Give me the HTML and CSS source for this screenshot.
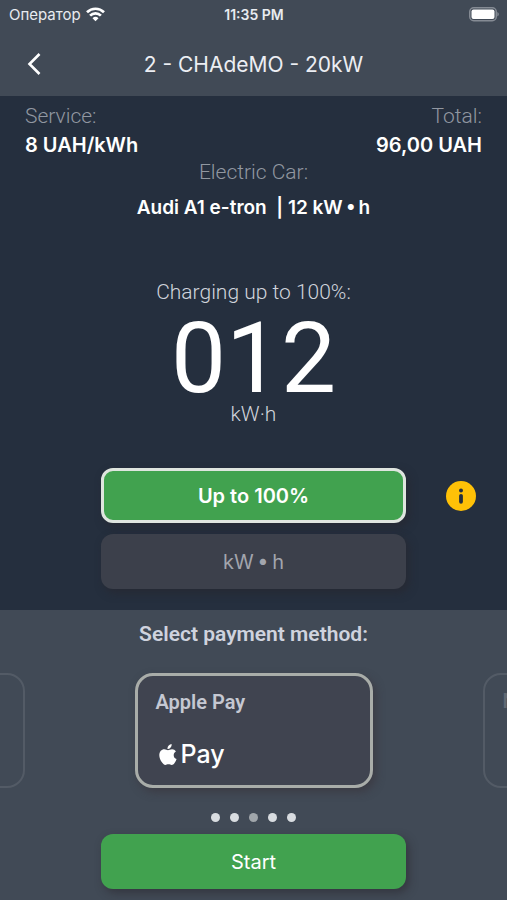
FILE: index.html
```html
<!DOCTYPE html>
<html lang="en">
<head>
  <meta charset="utf-8">
  <meta name="viewport" content="width=device-width, initial-scale=1">
  <title>2 - CHAdeMO - 20kW</title>
  <link rel="stylesheet" href="styles.css">
</head>
<body>
  <header class="header">
    <div class="status-bar">
      <div class="carrier">
        <span>Оператор</span>
        <svg width="19" height="15" viewBox="0 0 19 15" fill="none" stroke="#fff" stroke-width="2.7">
          <path d="M1 5.2a12.2 12.2 0 0 1 17 0"/>
          <path d="M4.1 8.6a7.7 7.7 0 0 1 10.8 0"/>
          <path d="M6.5 11.2a4.3 4.3 0 0 1 6 0L9.500 14.300z" fill="#fff" stroke="none"/>
        </svg>
      </div>
      <span class="time">11:35 PM</span>
      <svg class="battery" width="30" height="15" viewBox="0 0 30 15">
        <rect x="0.75" y="0.75" width="26.500" height="13" rx="4" fill="none" stroke="#858b94" stroke-width="1.500"/>
        <rect x="2.500" y="2.500" width="23" height="9.500" rx="2" fill="#fff"/>
        <path d="M28.300 5c2 .8 2 3.700 0 4.500z" fill="#858b94"/>
      </svg>
    </div>
    <div class="nav">
      <button class="back" type="button" aria-label="Back">
        <svg width="14" height="22" viewBox="0 0 14 22" fill="none" stroke="#fff" stroke-width="2.600">
          <path d="M12.500 1 2.500 11l10 10"/>
        </svg>
      </button>
      <h1 class="title">2 - CHAdeMO - 20kW</h1>
    </div>
  </header>

  <main class="main">
    <div class="summary">
      <div>
        <div class="label">Service:</div>
        <div class="value">8 UAH/kWh</div>
      </div>
      <div class="right">
        <div class="label">Total:</div>
        <div class="value">96,00 UAH</div>
      </div>
    </div>
    <div class="car">
      <div class="label">Electric Car:</div>
      <div class="car-name">Audi A1 e-tron&nbsp; | 12 kW&thinsp;•&thinsp;h</div>
    </div>
    <div class="counter">
      <div class="counter-label">Charging up to 100%:</div>
      <div class="digits">012</div>
      <div class="counter-label">kW·h</div>
    </div>
    <div class="modes">
      <button class="btn btn-active" type="button">Up to 100%</button>
      <button class="info" type="button" aria-label="Info">
        <svg width="30" height="30" viewBox="0 0 30 30">
          <circle cx="15" cy="15" r="15" fill="#ffc107"/>
          <circle cx="15" cy="9.500" r="2" fill="#252f3e"/>
          <path d="M15 14.800v6" stroke="#252f3e" stroke-width="3.800" stroke-linecap="round"/>
        </svg>
      </button>
      <button class="btn btn-muted" type="button">kW&thinsp;•&thinsp;h</button>
    </div>
  </main>

  <section class="payment">
    <h2 class="payment-title">Select payment method:</h2>
    <div class="cards">
      <button class="card card-side" type="button" aria-label="Previous method"></button>
      <button class="card" type="button">
        <span class="card-name">Apple Pay</span>
        <span class="card-logo">
          <svg width="18" height="21" viewBox="0 0 18 21" fill="#fff">
            <path d="M12.600 0c.2 1.700-.4 2.900-1.200 3.800-.8.900-1.800 1.300-2.900 1.200-.1-1.400.4-2.600 1.200-3.500C10.500.7 11.700.1 12.600 0z"/>
            <path d="M16.900 7.600c-1.400.8-2.200 2-2.200 3.600 0 1.900 1.100 3.300 2.900 3.900-.5 1.500-1.300 2.900-2.200 4.100-.8 1-1.600 1.700-2.700 1.700-1.200 0-1.700-.7-3.200-.7s-2.100.7-3.200.7c-1.200 0-2.100-.9-3-2.100C1.300 16.400.3 13.700.3 11.300c0-3.800 2.300-6 5-6 1.500 0 2.700.9 3.700.9s2.400-1 4.100-1c1.500 0 2.900.8 3.800 2.400z"/>
          </svg>
          <span>Pay</span>
        </span>
      </button>
      <button class="card card-side" type="button" aria-label="Next method">
        <span class="card-name">N</span>
        <span class="card-logo">P</span>
      </button>
    </div>
    <div class="dots">
      <span class="dot"></span>
      <span class="dot"></span>
      <span class="dot dot-current"></span>
      <span class="dot"></span>
      <span class="dot"></span>
    </div>
    <button class="btn btn-start" type="button">Start</button>
  </section>
</body>
</html>
```
FILE: styles.css
```css
* {
  box-sizing: border-box;
}
body {
  margin: 0;
  min-height: 100vh;
  display: flex;
  flex-direction: column;
  background: #414a56;
  color: #fff;
  font-family: Inter, "Liberation Sans", sans-serif;
}
button {
  border: none;
  padding: 0;
  background: none;
  color: inherit;
  font-family: inherit;
  cursor: pointer;
}
svg {
  display: block;
}

/* header */
.header {
  padding-bottom: 2px;
}
.status-bar {
  display: grid;
  grid-template-columns: 1fr auto 1fr;
  align-items: center;
  height: 28px;
  padding: 0 8px 0 9px;
  font-size: 15px;
  color: #e8ebf0;
}
.carrier {
  display: flex;
  align-items: center;
  gap: 5px;
}
.time {
  font-size: 14px;
  font-weight: 600;
}
.battery {
  justify-self: end;
}
.nav {
  display: grid;
  grid-template-columns: 44px 1fr 44px;
  align-items: center;
  height: 66px;
  padding: 6px 12px 0;
}
.back {
  display: flex;
  align-items: center;
  justify-content: center;
  height: 44px;
}
.title {
  margin: 0;
  font-size: 21px;
  font-weight: 400;
  text-align: center;
  color: #eceef3;
}

/* charging info */
.main {
  padding: 6px 0 21px;
  background: #252f3e;
}
.summary {
  display: flex;
  justify-content: space-between;
  padding: 0 25px;
}
.right {
  text-align: right;
}
.label {
  font-family: Roboto, sans-serif;
  font-size: 21px;
  font-weight: 300;
  line-height: 28px;
  color: #9197a1;
}
.value {
  padding-top: 2px;
  font-size: 20px;
  font-weight: 600;
  line-height: 26px;
}
.car {
  text-align: center;
}
.car-name {
  margin-top: 8px;
  font-size: 19px;
  font-weight: 600;
  line-height: 28px;
}
.counter {
  margin-top: 58px;
  font-family: Roboto, sans-serif;
  text-align: center;
}
.counter-label {
  font-size: 21px;
  font-weight: 300;
  line-height: 24px;
  color: #d0d4dc;
}
.digits {
  padding-top: 12px;
  font-size: 98px;
  line-height: 86px;
}
.modes {
  display: grid;
  grid-template-columns: 1fr 60% 1fr;
  row-gap: 11px;
  align-items: center;
  margin-top: 42px;
}
.btn {
  grid-column: 2;
  height: 55px;
  border-radius: 12px;
  font-size: 20px;
  box-shadow: 3px 4px 8px rgba(40, 36, 42, 0.5);
}
.btn-active {
  border: 3px solid #dfe5df;
  background: #41a24f;
  font-weight: 600;
}
.btn-muted {
  background: #3c404b;
  color: #a2a5ad;
}
.info {
  justify-self: end;
  margin-right: 31px;
}

/* payment */
.payment {
  padding-bottom: 11px;
  display: flex;
  flex-direction: column;
  align-items: center;
}
.payment-title {
  margin: 10px 0 0;
  font-family: Roboto, sans-serif;
  font-size: 21px;
  font-weight: 600;
  line-height: 28px;
  color: #cfd3de;
}
.cards {
  display: flex;
  justify-content: center;
  gap: 110px;
  width: 100%;
  padding: 25px 0;
  overflow: hidden;
}
.card {
  flex: none;
  display: flex;
  flex-direction: column;
  align-items: flex-start;
  width: 238px;
  height: 115px;
  padding: 12px 18px;
  border: 3px solid #a9ada9;
  border-radius: 18px;
  background: #404450;
  box-shadow: 3px 4px 8px rgba(56, 50, 56, 0.6);
}
.card-side {
  border-width: 2px;
  border-color: #535b66;
  background: #414a56;
  box-shadow: none;
}
.card-name {
  font-family: Roboto, sans-serif;
  font-size: 20px;
  font-weight: 600;
  line-height: 28px;
  color: #c5c8d2;
}
.card-logo {
  display: flex;
  align-items: center;
  gap: 4px;
  margin: 22px 0 0 3px;
  font-size: 25px;
  font-weight: 500;
  line-height: 32px;
}
.card-side .card-name,
.card-side .card-logo {
  color: #626973;
}
.dots {
  display: flex;
  gap: 10px;
}
.dot {
  width: 9px;
  height: 9px;
  border-radius: 50%;
  background: #d8dce0;
}
.dot-current {
  background: #a0a6ab;
}
.btn-start {
  width: 60%;
  margin-top: 12px;
  background: #41a24f;
}
```
